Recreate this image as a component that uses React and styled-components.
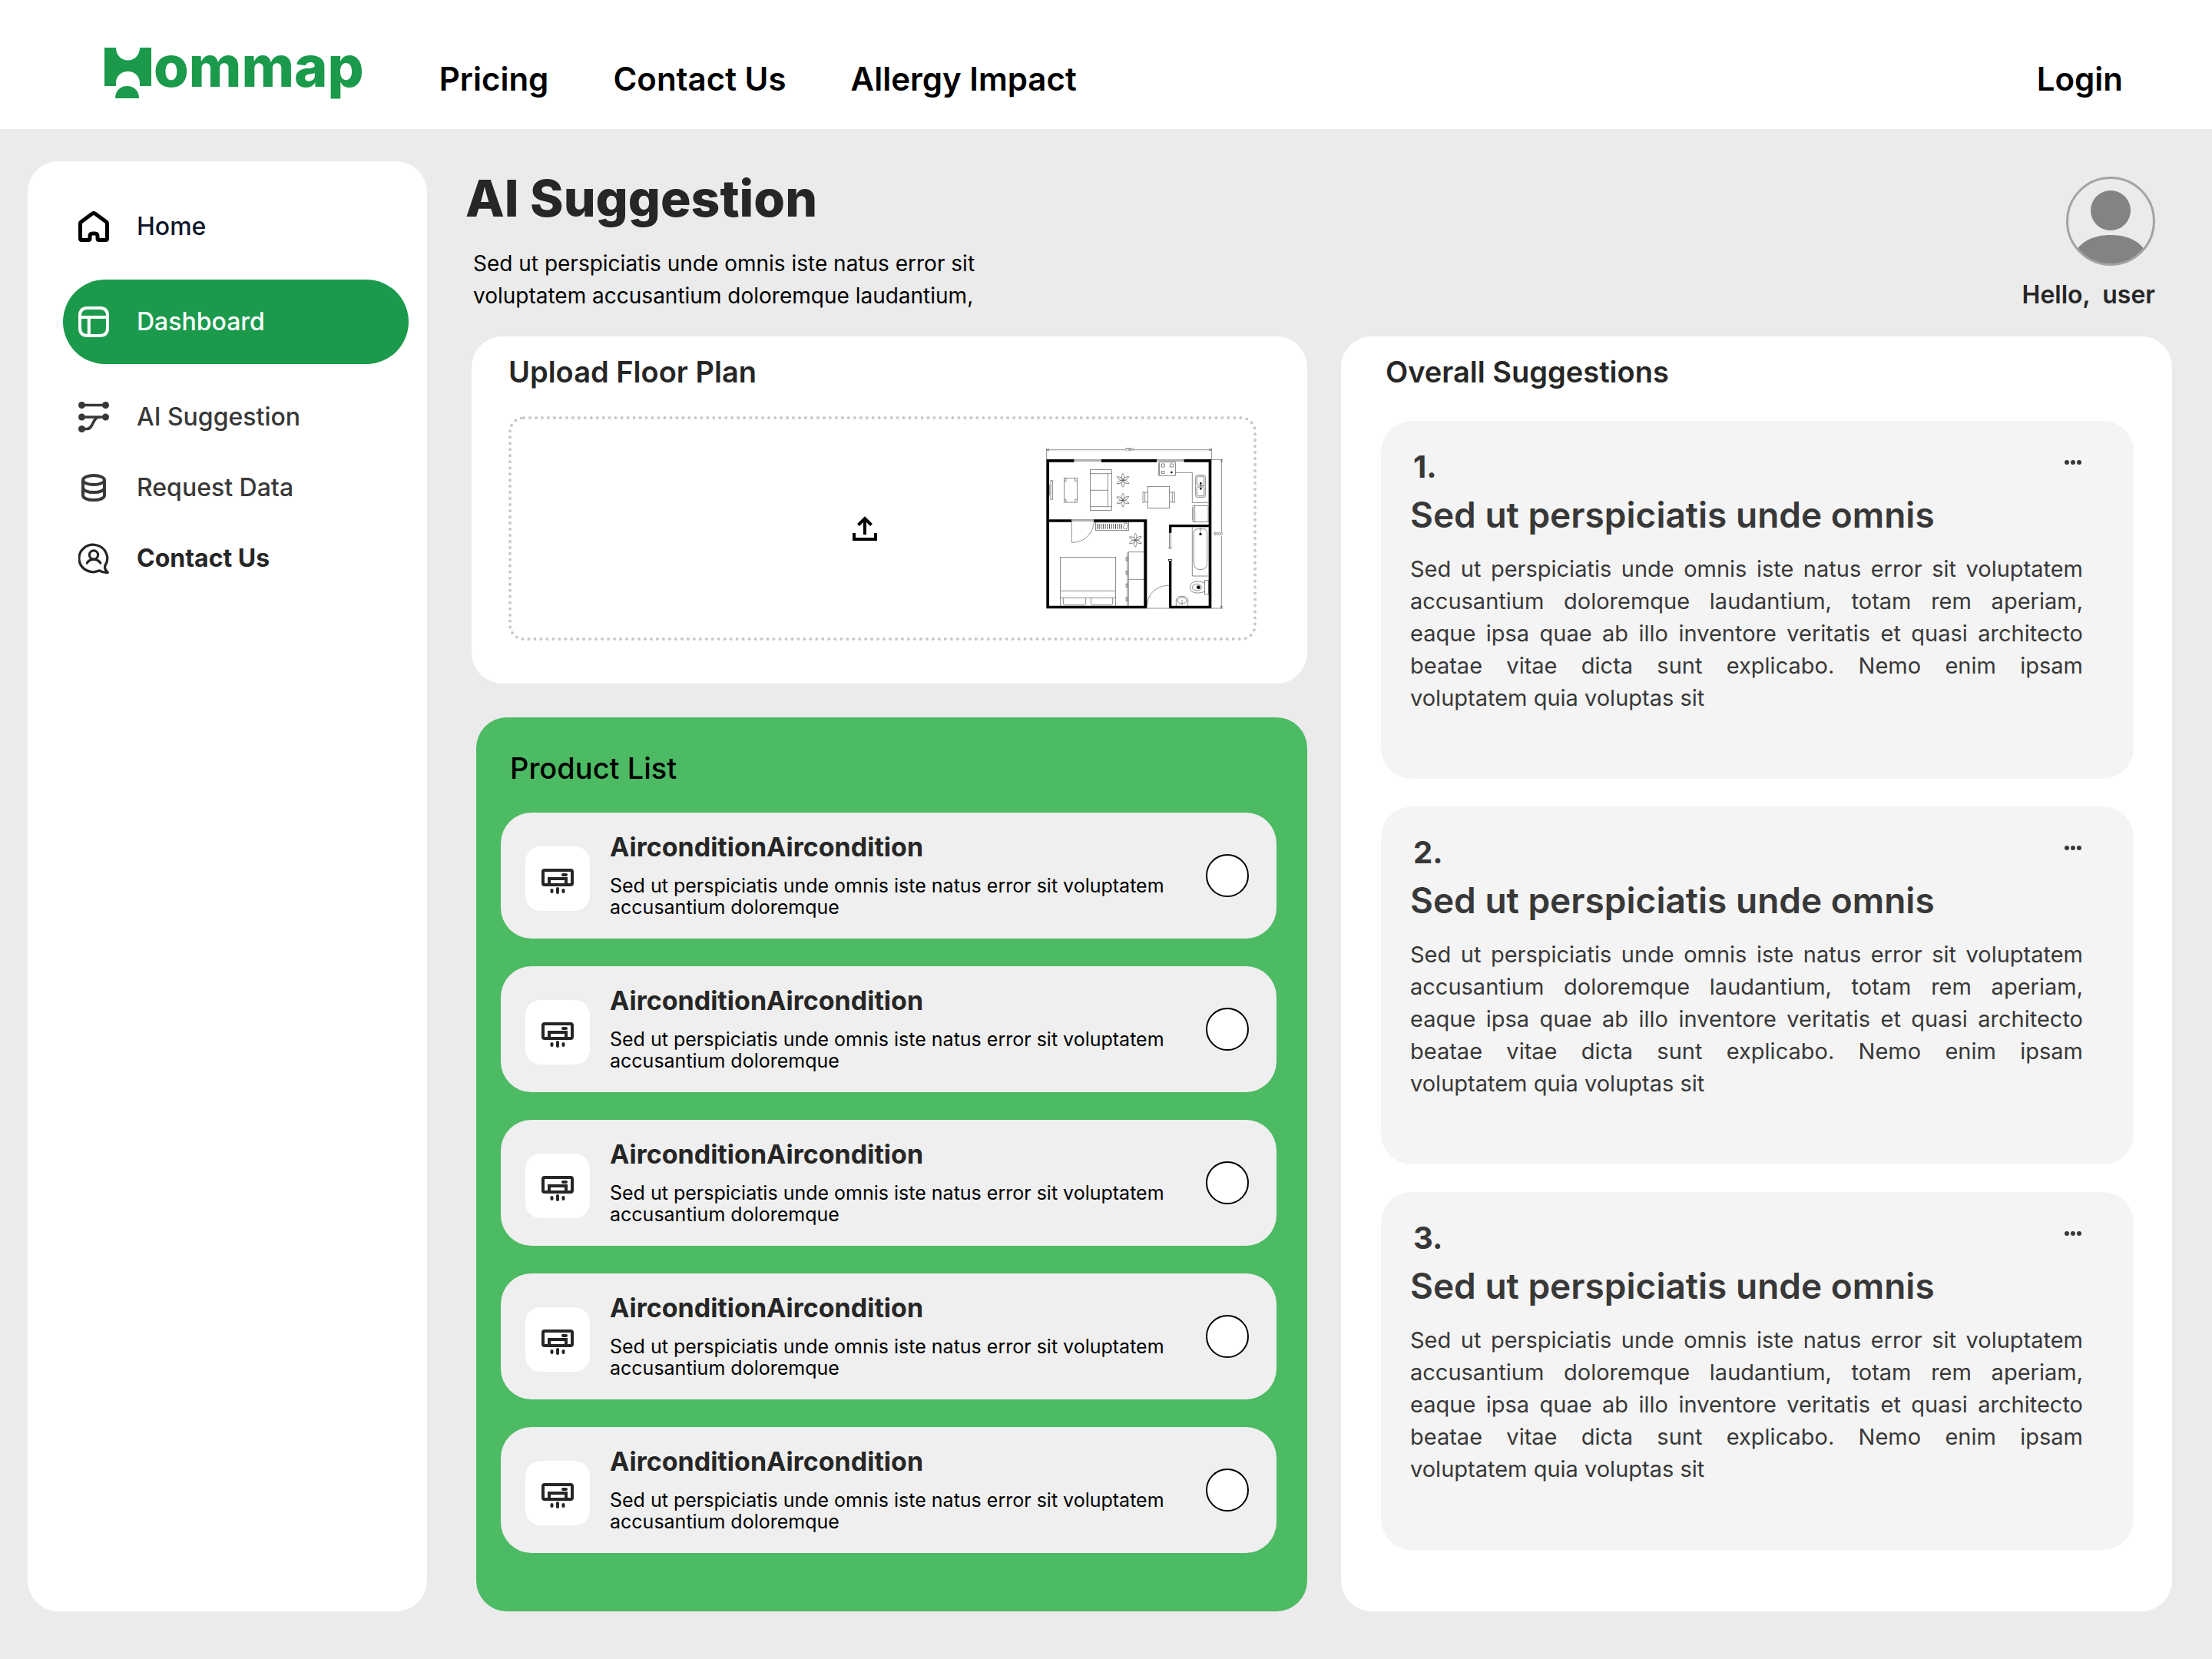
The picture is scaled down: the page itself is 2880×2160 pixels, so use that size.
import React from "react";
import styled, { createGlobalStyle } from "styled-components";

const GlobalStyle = createGlobalStyle`
  *, *::before, *::after { box-sizing: border-box; }
  body {
    margin: 0;
    background: #ebebeb;
    color: #262626;
    font-family: Inter, "Open Sans", sans-serif;
  }
  h1, h2, h3, p, ul, ol { margin: 0; padding: 0; }
  ul, ol { list-style: none; }
  a { color: inherit; text-decoration: none; }
  button { border: 0; padding: 0; background: none; color: inherit; font: inherit; cursor: pointer; }
  svg { display: block; flex: none; }
`;

const Page = styled.div`
  min-height: 100vh;
  display: flex;
  flex-direction: column;
`;

const TopBar = styled.header`
  height: 168px;
  padding: 38px 116px 0 136px;
  display: flex;
  align-items: center;
  background: #fff;
`;

const Logo = styled.a`
  display: flex;
  align-items: flex-start;
  gap: 2px;
  margin-bottom: 16px;
  color: #1b9a4c;
`;

const LogoWord = styled.span`
  font-size: 74px;
  line-height: 48px;
  height: 66px;
  font-weight: 800;
`;

const TopNav = styled.nav`
  flex: 1;
  display: flex;
  gap: 84px;
  margin-left: 98px;
`;

const TopLink = styled.a`
  font-size: 42px;
  line-height: 48px;
  font-weight: 600;
  color: #000;
`;

const Body = styled.div`
  flex: 1;
  display: flex;
  gap: 48px;
  padding: 42px 52px 62px 36px;
`;

const Sidebar = styled.aside`
  flex: none;
  width: 520px;
  padding: 62px 24px 62px 46px;
  border-radius: 40px;
  background: #fff;
`;

const Menu = styled.ul`
  display: flex;
  flex-direction: column;
  gap: 46px;
`;

const MenuLink = styled.a`
  display: flex;
  align-items: center;
  gap: 36px;
  height: ${(p) => (p.$active ? 110 : 46)}px;
  padding-left: 20px;
  border-radius: 55px;
  font-size: 32px;
  line-height: 40px;
  font-weight: ${(p) => (p.$strong ? 700 : 500)};
  color: ${(p) => p.$color};
  background: ${(p) => (p.$active ? "#1b9a4c" : "transparent")};
`;

const Main = styled.main`
  flex: 1;
  min-width: 0;
  display: flex;
  flex-direction: column;
`;

const Intro = styled.section`
  display: flex;
  justify-content: space-between;
  padding: 8px 22px 32px 2px;
`;

const PageTitle = styled.h1`
  font-size: 66px;
  line-height: 80px;
  font-weight: 800;
`;

const Lead = styled.p`
  max-width: 700px;
  margin-top: 24px;
  padding-left: 10px;
  font-size: 28px;
  line-height: 42px;
  color: #000;
`;

const User = styled.div`
  display: flex;
  flex-direction: column;
  align-items: flex-end;
  gap: 16px;
  padding-top: 12px;
  font-size: 32px;
  line-height: 44px;
  font-weight: 600;
  white-space: pre;
`;

const Columns = styled.div`
  flex: 1;
  display: grid;
  grid-template-columns: 1088fr 1082fr;
  gap: 44px;
  padding-left: 10px;
`;

const Column = styled.div`
  display: flex;
  flex-direction: column;
  gap: 44px;
`;

const Panel = styled.section`
  border-radius: 40px;
  background: #fff;
`;

const UploadPanel = styled(Panel)`
  padding: 24px 66px 56px 48px;
`;

const ProductPanel = styled(Panel)`
  flex: 1;
  margin-left: 6px;
  padding: 44px 40px 76px 32px;
  background: #4dba64;
`;

const SuggestionPanel = styled(Panel)`
  padding: 24px 50px 80px 52px;
`;

const PanelTitle = styled.h2`
  font-size: 38px;
  line-height: 44px;
  font-weight: ${(p) => p.$weight || 600};
  padding-left: ${(p) => p.$indent || 0}px;
  color: ${(p) => p.$color || "#262626"};
  margin-bottom: ${(p) => p.$space || 36}px;
`;

const DropZone = styled.div`
  height: 292px;
  display: grid;
  grid-template-columns: minmax(0, 1fr) auto minmax(0, 1fr);
  align-items: center;
  padding-right: 40px;
  border: 4px dotted #c8c8c8;
  border-radius: 20px;
`;

const UploadButton = styled.button`
  grid-column: 2;
  margin-right: 6px;
  color: #000;
`;

const PlanFigure = styled.div`
  justify-self: end;
`;

const CardList = styled.ul`
  display: flex;
  flex-direction: column;
  gap: 36px;
`;

const ProductCard = styled.li`
  display: flex;
  align-items: center;
  min-height: 164px;
  padding: 0 36px 0 32px;
  border-radius: 40px;
  background: #efefef;
`;

const IconTile = styled.div`
  flex: none;
  width: 84px;
  height: 84px;
  margin-top: 8px;
  border-radius: 20px;
  background: #fff;
`;

const ProductText = styled.label`
  flex: 1;
  display: flex;
  flex-direction: column;
  gap: 14px;
  padding: 0 24px 4px 26px;
`;

const ProductName = styled.span`
  font-size: 34px;
  line-height: 44px;
  font-weight: 700;
`;

const ProductInfo = styled.span`
  max-width: 750px;
  font-size: 25px;
  line-height: 28px;
  color: #000;
`;

const Radio = styled.input`
  appearance: none;
  flex: none;
  width: 56px;
  height: 56px;
  margin: 0;
  border: 2px solid #000;
  border-radius: 50%;
  background: #fff;
  &:checked { box-shadow: inset 0 0 0 12px #fff; background: #1b9a4c; }
`;

const SuggestionCard = styled.li`
  padding: 36px 66px 84px 38px;
  border-radius: 40px;
  background: #f4f4f4;
  color: #383838;
`;

const SuggestionTop = styled.div`
  display: flex;
  justify-content: space-between;
  padding: 0 2px 0 4px;
`;

const SuggestionNumber = styled.span`
  font-size: 40px;
  line-height: 48px;
  font-weight: 700;
`;

const MoreButton = styled.button`
  height: 36px;
`;

const SuggestionHeading = styled.h3`
  margin-top: 10px;
  font-size: 46px;
  line-height: 56px;
  font-weight: 600;
`;

const SuggestionText = styled.p`
  margin-top: 22px;
  font-size: 29px;
  line-height: 42px;
  text-align: justify;
`;

const LogoMark = () => (
  <svg width="62" height="66" viewBox="0 0 62 66" fill="currentColor" aria-hidden="true">
    <path d="M0 0H15C15 10 22 16.500 30.500 16.500C39 16.500 46 10 46 0H61V50H46V46C46 37 39 31 30.500 31C22 31 15 37 15 46V50H0Z" />
    <path d="M14 66C14 56 21 50 29.500 50C38 50 45 56 45 66Z" />
  </svg>
);

const HomeIcon = () => (
  <svg width="40" height="40" viewBox="0 0 40 40" fill="none" stroke="#000" strokeWidth="5" strokeLinejoin="round" aria-hidden="true">
    <path d="M18 3.200Q20 1.800 22 3.200L36.500 14Q37.500 14.800 37.500 16V35.500Q37.500 37.500 35.500 37.500H27Q25 37.500 25 35.500V32.500Q25 29 21.500 29H18.500Q15 29 15 32.500V35.500Q15 37.500 13 37.500H4.500Q2.500 37.500 2.500 35.500V16Q2.500 14.800 3.500 14Z" />
  </svg>
);

const DashboardIcon = () => (
  <svg width="40" height="40" viewBox="0 0 40 40" fill="none" stroke="currentColor" strokeWidth="4" aria-hidden="true">
    <path d="M2 12Q2 2 12 2H28Q38 2 38 12V28Q38 38 28 38H12Q2 38 2 28ZM2 14H38M13.800 14V38" />
  </svg>
);

const FlowIcon = () => (
  <svg width="40" height="40" viewBox="0 0 40 40" fill="none" stroke="currentColor" strokeWidth="3.600" aria-hidden="true">
    <path d="M4.500 4.500H35.500M4.500 20H35.500M4.500 35.500H11C20 35.500 18 20 28 20" />
    <g fill="currentColor" stroke="none">
      <circle cx="4.500" cy="4.500" r="4.500" />
      <circle cx="35.500" cy="4.500" r="4.500" />
      <circle cx="4.500" cy="20" r="4.500" />
      <circle cx="35.500" cy="20" r="4.500" />
      <circle cx="4.500" cy="35.500" r="4.500" />
    </g>
  </svg>
);

const DatabaseIcon = () => (
  <svg width="40" height="40" viewBox="0 0 40 40" fill="none" stroke="currentColor" strokeWidth="4" aria-hidden="true">
    <ellipse cx="20" cy="10" rx="14" ry="6" />
    <path d="M6 10V30C6 33.500 12 36 20 36S34 33.500 34 30V10M6 20C6 23.500 12 26 20 26S34 23.500 34 20" />
  </svg>
);

const ContactIcon = () => (
  <svg width="40" height="40" viewBox="0 0 40 40" fill="none" stroke="currentColor" strokeWidth="3.200" strokeLinejoin="round" strokeLinecap="round" aria-hidden="true">
    <path d="M38.400 38.400C36 36.500 33.800 33.500 34.800 29.500A18.400 17.700 0 1 0 27.500 35.800C30.500 37.800 34 38.600 38.400 38.400Z" />
    <circle cx="20" cy="15.500" r="5.600" />
    <path d="M11.300 26C13 23 16 21.300 20 21.300S27 23 28.700 26" />
  </svg>
);

const UploadIcon = () => (
  <svg width="32" height="32" viewBox="0 0 32 32" fill="none" stroke="currentColor" strokeWidth="4" aria-hidden="true">
    <path d="M2 22V30H30V22M16 24V3M7.500 11.500L16 3L24.500 11.500" />
  </svg>
);

const AirconIcon = () => (
  <svg width="84" height="84" viewBox="0 0 84 84" fill="none" stroke="#262626" strokeWidth="4" aria-hidden="true">
    <rect x="23" y="31" width="38" height="19" rx="2" />
    <path d="M31 50V42H53V50" />
    <g fill="#262626" stroke="none">
      <rect x="47" y="35" width="8" height="4" rx="2" />
      <rect x="32.500" y="55" width="4" height="6" rx="2" />
      <rect x="40" y="53" width="4" height="9" rx="2" />
      <rect x="47.500" y="55" width="4" height="6" rx="2" />
    </g>
  </svg>
);

const DotsIcon = () => (
  <svg width="22" height="6" viewBox="0 0 22 6" fill="currentColor" aria-hidden="true">
    <circle cx="3" cy="3" r="3" />
    <circle cx="11" cy="3" r="3" />
    <circle cx="19" cy="3" r="3" />
  </svg>
);

const Avatar = () => (
  <svg width="116" height="116" viewBox="0 0 116 116" role="img" aria-label="User">
    <clipPath id="avatar-clip"><circle cx="58" cy="58" r="57" /></clipPath>
    <circle cx="58" cy="44" r="26" fill="#838383" />
    <path d="M10 102C18 84 36 76 58 76S98 84 106 102V116H10Z" fill="#838383" clipPath="url(#avatar-clip)" />
    <circle cx="58" cy="58" r="56.500" fill="none" stroke="#a3a3a3" strokeWidth="3" />
  </svg>
);

const Plant = ({ x, y }) => (
  <g transform={`translate(${x} ${y})`}>
    {[0, 58, 118, 180, 240, 300].map((angle) => (
      <path key={angle} d="M0 0C-7 -9 -6 -17 0 -27C6 -17 7 -9 0 0Z" transform={`rotate(${angle})`} />
    ))}
  </g>
);

const FloorPlan = () => (
  <svg width="230" height="210" viewBox="66 66 690 630" fill="none" role="img" aria-label="Floor plan">
    <g stroke="#555" strokeWidth="2">
      <path d="M68 68V112M712 68V112M68 74H376M406 74H712M78 70L68 74L78 78M702 70L712 74L702 78" />
      <path d="M712 112H756M712 693H756M751 112V394M751 410V693M747 122L751 112L755 122M747 683L751 693L755 683" />
      <path d="M460 693H546" />
      <rect x="84" y="194" width="7" height="74" /><path d="M80 210V252" />
      <rect x="136" y="184" width="51" height="95" />
      <path d="M136 196H144V184M187 196H179V184M136 268H144V279M187 268H179V279" />
      <rect x="238" y="152" width="84" height="158" />
      <path d="M238 167H307V296H238M238 232H307M307 167H322M307 296H322" />
      <rect x="463" y="217" width="85" height="85" />
      <path d="M463 240H452L444 238V281L452 278H463M452 240V278M548 240H559L568 238V281L559 278H548M559 240V278" />
      <rect x="509" y="122" width="62" height="53" /><path d="M505 124V175M571 163H637V280H701" />
      <rect x="517" y="129" width="12" height="12" /><rect x="550" y="129" width="12" height="12" />
      <rect x="518" y="157" width="10" height="9" />
      <rect x="650" y="173" width="38" height="86" rx="6" />
      <rect x="655" y="178" width="28" height="34" rx="5" /><rect x="655" y="219" width="28" height="35" rx="5" />
      <path d="M670 200V230M666 215H686" />
      <rect x="639" y="293" width="60" height="62" /><path d="M647 293V355M639 300V348" />
      <path d="M166 355V436C214 436 248 404 254 355" />
      <rect x="259" y="357" width="130" height="31" />
      <rect x="370" y="361" width="14" height="22" rx="4" transform="rotate(14 377 372)" />
      <rect x="122" y="493" width="216" height="192" /><path d="M122 625H338M122 652H338" />
      <path d="M133 652V672Q133 680 141 680H213Q221 680 221 672V652M241 652V672Q241 680 249 680H318Q326 680 326 672V652" />
      <path d="M448 473H388V684M383 475V684M388 580H448" />
      <path d="M378 494H384V508H378ZM378 547H384V561H378ZM378 597H384V611H378ZM378 650H384V664H378Z" />
      <rect x="547" y="398" width="6" height="58" /><path d="M543 459H558" />
      <path d="M460 685C462 636 496 604 547 604" />
      <path d="M637 376V567H701" />
      <path d="M643 400Q643 383 660 383H678Q695 383 695 400V514Q695 542 669 542Q643 542 643 514ZM669 378V400" />
      <rect x="685" y="584" width="16" height="54" />
      <path d="M685 594C650 580 628 592 628 611S650 640 685 628" />
      <ellipse cx="655" cy="611" rx="18" ry="13" />
      <path d="M574 684V660Q577 646 597 646Q617 646 620 660V684" />
      <ellipse cx="597" cy="663" rx="18" ry="12" /><path d="M597 660V680" />
      <Plant x={366} y={193} />
      <Plant x={366} y={271} />
      <Plant x={415} y={427} />
    </g>
    <path d="M264 373H364" stroke="#555" strokeWidth="20" strokeDasharray="3 5" />
    <g fill="#000">
      <path d="M67 111H176V122H78V346H166V356H78V683H448V356H252V346H460V683H460V694H67Z" />
      <path d="M282 111H498V122H282ZM604 111H712V694H546V508H556V683H701V376H556V398H546V366H701V122H604Z" />
      <circle cx="669" cy="403" r="5" /><circle cx="661" cy="611" r="7" />
      <circle cx="670" cy="205" r="4" /><circle cx="670" cy="226" r="4" /><circle cx="556" cy="162" r="4" />
    </g>
    <path d="M176 116H282M498 116H604M166 350H252" stroke="#888" strokeWidth="8" />
    <path d="M176 117H282M498 117H604M166 351H252" stroke="#ddd" strokeWidth="3" />
    <rect x="544" y="502" width="12" height="6" stroke="#000" strokeWidth="2" fill="#fff" />
    <g fill="#333" fontSize="14" textAnchor="middle">
      <text x="391" y="79">7380</text>
      <text x="738" y="407">6000</text>
    </g>
  </svg>
);

const menu = [
  { label: "Home", Icon: HomeIcon, color: "#0f172a" },
  { label: "Dashboard", Icon: DashboardIcon, color: "#fff", active: true },
  { label: "AI Suggestion", Icon: FlowIcon, color: "#383838" },
  { label: "Request Data", Icon: DatabaseIcon, color: "#383838" },
  { label: "Contact Us", Icon: ContactIcon, color: "#262626", strong: true },
];

const products = [1, 2, 3, 4, 5];
const suggestions = [1, 2, 3];

export default function App() {
  return (
    <>
      <GlobalStyle />
      <Page>
        <TopBar>
          <Logo href="#" aria-label="Hommap">
            <LogoMark />
            <LogoWord>ommap</LogoWord>
          </Logo>
          <TopNav>
            <TopLink href="#">Pricing</TopLink>
            <TopLink href="#">Contact Us</TopLink>
            <TopLink href="#">Allergy Impact</TopLink>
          </TopNav>
          <TopLink href="#">Login</TopLink>
        </TopBar>
        <Body>
          <Sidebar>
            <Menu>
              {menu.map(({ label, Icon, color, active, strong }) => (
                <li key={label}>
                  <MenuLink href="#" $color={color} $active={active} $strong={strong}>
                    <Icon />
                    {label}
                  </MenuLink>
                </li>
              ))}
            </Menu>
          </Sidebar>
          <Main>
            <Intro>
              <div>
                <PageTitle>AI Suggestion</PageTitle>
                <Lead>
                  Sed ut perspiciatis unde omnis iste natus error sit voluptatem accusantium doloremque laudantium,
                </Lead>
              </div>
              <User>
                <Avatar />
                <span>{"Hello,  user"}</span>
              </User>
            </Intro>
            <Columns>
              <Column>
                <UploadPanel>
                  <PanelTitle>Upload Floor Plan</PanelTitle>
                  <DropZone>
                    <UploadButton type="button" aria-label="Upload">
                      <UploadIcon />
                    </UploadButton>
                    <PlanFigure>
                      <FloorPlan />
                    </PlanFigure>
                  </DropZone>
                </UploadPanel>
                <ProductPanel>
                  <PanelTitle $indent={12} $color="#000" $weight={500}>Product List</PanelTitle>
                  <CardList>
                    {products.map((id) => (
                      <ProductCard key={id}>
                        <IconTile>
                          <AirconIcon />
                        </IconTile>
                        <ProductText htmlFor={`product-${id}`}>
                          <ProductName>AirconditionAircondition</ProductName>
                          <ProductInfo>
                            Sed ut perspiciatis unde omnis iste natus error sit voluptatem accusantium doloremque
                          </ProductInfo>
                        </ProductText>
                        <Radio type="radio" name="product" id={`product-${id}`} />
                      </ProductCard>
                    ))}
                  </CardList>
                </ProductPanel>
              </Column>
              <SuggestionPanel>
                <PanelTitle $indent={6} $space={42}>Overall Suggestions</PanelTitle>
                <CardList as="ol">
                  {suggestions.map((n) => (
                    <SuggestionCard key={n}>
                      <SuggestionTop>
                        <SuggestionNumber>{n}.</SuggestionNumber>
                        <MoreButton type="button" aria-label="More">
                          <DotsIcon />
                        </MoreButton>
                      </SuggestionTop>
                      <SuggestionHeading>Sed ut perspiciatis unde omnis</SuggestionHeading>
                      <SuggestionText>
                        Sed ut perspiciatis unde omnis iste natus error sit voluptatem accusantium doloremque
                        laudantium, totam rem aperiam, eaque&nbsp;ipsa quae ab illo inventore veritatis et quasi
                        architecto beatae vitae dicta sunt explicabo. Nemo enim ipsam voluptatem&nbsp;quia voluptas sit
                      </SuggestionText>
                    </SuggestionCard>
                  ))}
                </CardList>
              </SuggestionPanel>
            </Columns>
          </Main>
        </Body>
      </Page>
    </>
  );
}
